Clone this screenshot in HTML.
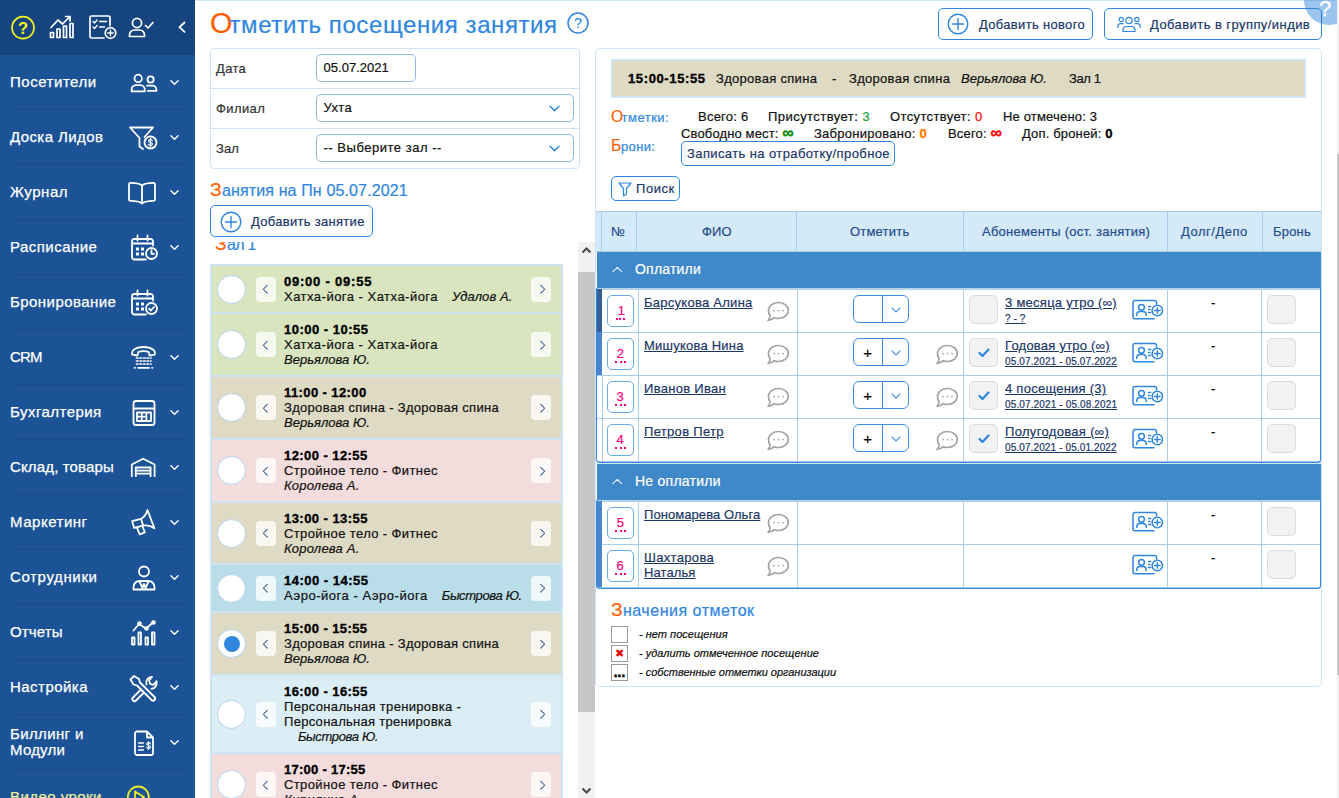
<!DOCTYPE html>
<html lang="ru"><head>
<meta charset="utf-8">
<title>Отметить посещения занятия</title>
<style>
*{box-sizing:border-box;margin:0;padding:0}
html,body{width:1339px;height:798px;overflow:hidden;background:#fff}
body{font-family:"Liberation Sans",sans-serif;font-size:13px;color:#111;position:relative;-webkit-text-stroke:.2px}
strong,b{-webkit-text-stroke:.35px}
a{color:#1b3766;text-decoration:underline}
svg{display:block}
em,i{font-style:italic}
.abs{position:absolute}
.o{color:#ff5e00;font-size:120%}
/* ---------- sidebar ---------- */
#sb{position:absolute;left:0;top:0;width:195px;height:798px;background:#1b5396;overflow:hidden;color:#fff}
#sb .top{height:55px;background:#15447f;position:relative}
#sb .top svg{position:absolute}
.mi{height:55px;position:relative}
.mi:after{content:"";position:absolute;left:12px;right:11px;bottom:0;height:1px;background:#184b8a}
.mi span{position:absolute;left:10px;top:17px;font-size:15px;line-height:20px;white-space:nowrap;-webkit-text-stroke:.25px}
.mi svg.ic{position:absolute;left:127px;top:11px;width:34px;height:34px;fill:none;stroke:#fff;stroke-width:1.8;stroke-linecap:round;stroke-linejoin:round}
.mi svg.ch{position:absolute;left:169.500px;top:22.500px;width:9px;height:9px;fill:none;stroke:#fff;stroke-width:1.600;stroke-linecap:round;stroke-linejoin:round}
/* ---------- main ---------- */
#topline{position:absolute;left:195px;top:0;width:1142px;height:1px;background:#cfe4f2}
h1{position:absolute;left:210px;top:3px;font-size:24px;line-height:40px;font-weight:400;color:#2e86de;white-space:nowrap}
.helpc{position:absolute}
#fbox{position:absolute;left:210px;top:48px;width:370px;height:121px;border:1px solid #cfe2f3;border-radius:4px}
.fr{height:40px;border-bottom:1px solid #cfe2f3;position:relative}
.fr:last-child{border-bottom:0}
.fr label{position:absolute;left:5px;top:11px;font-size:13px;line-height:18px;color:#333}
.inp{position:absolute;left:105px;top:5px;height:28px;border:1px solid #8fbbe6;border-radius:5px;font-size:13px;line-height:26px;color:#111;padding-left:6.500px;white-space:nowrap}
.sch{position:absolute;right:13px;top:8px;width:11px;height:11px;fill:none;stroke:#2e86de;stroke-width:1.300;stroke-linecap:round;stroke-linejoin:round}
h2{position:absolute;font-size:16px;line-height:28px;font-weight:400;color:#2e86de;white-space:nowrap}
.btn{position:absolute;border:1px solid #2e86de;border-radius:5px;background:#fff;color:#1b3766;font-size:13px}
.btn span{position:absolute;line-height:16px;white-space:nowrap}
.btn svg{position:absolute;fill:none;stroke:#2e86de;stroke-width:1.400;stroke-linecap:round}
#lst{position:absolute;left:205px;top:242px;width:373px;height:556px;overflow:hidden}
#lst h3{position:absolute;left:10px;top:-12px;font-size:16px;line-height:28px;font-weight:400;color:#2e86de;white-space:nowrap}
.li{position:relative;margin-left:5px;width:353px;border:2px solid #cfe4f3;border-bottom:0}
#lst .li:nth-of-type(1){margin-top:22px}
.li.g{background:#d9e5bf}.li.b{background:#dfdac4}.li.p{background:#f3dcdc}.li.a{background:#b9dde9}.li.l{background:#dceef5}
.rd{position:absolute;left:5px;top:50%;margin-top:-14.500px;width:29px;height:29px;border-radius:50%;background:#fff;border:1px solid #b5d3ee}
.rd.on:after{content:"";position:absolute;left:5.500px;top:5.500px;width:16px;height:16px;border-radius:50%;background:#2e86de}
.pv,.nx{position:absolute;top:50%;margin-top:-12.500px;width:20px;height:25px;border-radius:4px;background:rgba(255,255,255,.78)}
.pv{left:44px}.nx{left:319px}
.nx svg{left:7.500px !important}
.pv svg,.nx svg{position:absolute;left:6px;top:7.500px;width:7px;height:10.500px;fill:none;stroke:#34558a;stroke-width:1.150;stroke-linecap:round;stroke-linejoin:round}
.tx{position:absolute;left:72px;top:8px;line-height:15px;font-size:13px;color:#111;white-space:nowrap}
.tx strong{font-weight:700;color:#000}
#lsb{position:absolute;left:578px;top:242px;width:17px;height:556px;background:#f1f1f1}
#lsb i{position:absolute;left:0;top:30px;width:17px;height:440px;background:#c6c6c6}
#lsb svg{position:absolute;left:0;width:17px;height:17px;fill:none;stroke:#4a4a4a;stroke-width:2.100}
#lsb .up{top:0}#lsb .dn{bottom:0}
#pnl{position:absolute;left:595px;top:48px;width:727px;height:639px;border:1px solid #cfe2f3;border-radius:5px}
#hc{position:absolute;left:1304px;top:-25px;width:50px;height:50px;border-radius:50%;background:rgba(46,134,222,.48);color:#fff}
#hc span{position:absolute;left:15px;top:24px;font-size:22px;line-height:20px;font-weight:400;-webkit-text-stroke:.4px #fff}
#ibar{position:absolute;left:611px;top:59px;width:695px;height:39px;border:2px solid #cfe4f3;background:#dfdac4;white-space:nowrap}
#ibar>*{position:absolute;top:10px;line-height:15px;font-size:13px;color:#111}
#ibar strong{color:#000}
.sl{position:absolute;line-height:20px;font-size:13px;white-space:pre;color:#111}
.sl b{font-weight:700}
#thead{position:absolute;left:596px;top:211px;width:725px;height:41px;background:#d4eaf8;border-top:1px solid #a9cde9;border-bottom:1px solid #a9cde9;color:#244c8c;white-space:nowrap}
#thead span{position:absolute;top:12px;line-height:16px;font-size:13px}
.vl{position:absolute;top:0;bottom:0;width:1px;background:#a9cde9}
.grp{position:absolute;left:597px;width:724px;height:39px;background:#3f88c9;border-top:1px solid #a9cde9;border-bottom:2px solid #b4d3ea;color:#fff}
.grp.g2{height:40px;border-top:2px solid #d6e7f5}
.grp.g2 svg{top:13.500px}.grp.g2 span{top:8px}
.grp svg{position:absolute;left:14.500px;top:13.500px;width:10.500px;height:7px;fill:none;stroke:#eef4fb;stroke-width:1.200;stroke-linecap:round;stroke-linejoin:round}
.grp span{position:absolute;left:38px;top:8px;font-size:14px;line-height:18px;white-space:nowrap}
.tr{position:absolute;left:597px;width:724px;height:43px;border-bottom:1px solid #a9cde9;background:#fff}
.tr .bar{position:absolute;left:0;top:-1px;bottom:0;width:5px}
.nb{position:absolute;left:10px;top:5px;width:27px;height:32px;border:1px solid #6aa8e6;border-radius:5px;text-align:center;color:#f0047f;font-size:13px;line-height:30px}
.nb span{border-bottom:2px dotted #f0047f;padding:0 1.500px 0}
.nm{position:absolute;left:47px;top:5px;line-height:15px;white-space:nowrap}
.chat{position:absolute;fill:none;stroke:#a3a3a3;stroke-width:1.700;stroke-linejoin:round}
.chat .d{fill:#a3a3a3;stroke:none}
.card{position:absolute;fill:none;stroke:#2e86de;stroke-width:1.500;stroke-linecap:round;stroke-linejoin:round}
.sel{position:absolute;left:256px;top:5px;width:56px;height:28px;border:1px solid #3a8ee6;border-radius:6px;line-height:26px}
.sel span{position:absolute;left:0;top:.500px;width:28px;text-align:center;color:#000;font-size:15px}
.sel i{position:absolute;left:28px;top:0;bottom:0;width:1px;background:#3a8ee6}
.sel svg{position:absolute;left:37px;top:8.500px;width:10px;height:10px;fill:none;stroke:#4f9be6;stroke-width:1.100;stroke-linecap:round;stroke-linejoin:round}
.cb{position:absolute;left:372px;top:5px;width:29px;height:29px;border:1px solid #dcdcdc;border-radius:5px;background:#f2f2f2}
.cb svg{position:absolute;left:8px;top:9px;width:12px;height:10px;fill:none;stroke:#2e86de;stroke-width:2.200;stroke-linecap:round;stroke-linejoin:round}
.sub{position:absolute;left:408px;top:5px;line-height:15px;white-space:nowrap}
.sub .sm{font-size:10px}
.dash{position:absolute;left:614px;top:5px;line-height:15px;color:#000}
.tw{position:absolute;left:596px;width:725px;border:1px solid #2e86de;border-top:0;border-radius:0 0 4px 4px;pointer-events:none}
.inf{font-size:16px;line-height:10px}
.lg{position:absolute;left:611px;height:16px;white-space:nowrap}
.lg i{position:absolute;left:0;top:0;width:17px;height:17px;border:1px solid #9a9a9a;background:#fff}
.lg i b{position:absolute;line-height:12px;font-style:normal;color:#000}
.lg em{position:absolute;left:28px;top:0;font-size:11px;line-height:16px;color:#111}
#psb{position:absolute;left:1337px;top:0;width:2px;height:798px;background:#f1f1f1}
#psb i{position:absolute;left:0;top:154px;width:2px;height:521px;background:#c6c6c6}
</style></head><body>
<div id="sb">
  <div class="top">
    <svg style="left:10px;top:15px;width:26px;height:26px" viewBox="0 0 26 26"><circle cx="13" cy="12.700" r="11" fill="none" stroke="#f4f41a" stroke-width="1.700"></circle><text x="13" y="18.600" text-anchor="middle" font-family="Liberation Sans, sans-serif" font-size="16.500" font-weight="700" fill="#f4f41a">?</text></svg>
    <svg style="left:48px;top:14px;width:30px;height:26px;fill:none;stroke:#fff;stroke-width:1.700;stroke-linejoin:round;stroke-linecap:round" viewBox="0 0 30 26"><path d="M2.500 18.500h3v5h-3zM9 15h3v8.500h-3zM15.500 12h3v11.500h-3zM22 9.500h3v14h-3z"></path><path d="M3 13.500l7-7.500 4.500 4 7.500-7.500M17.500 2.500h4.500v4.500"></path></svg>
    <svg style="left:88px;top:14px;width:30px;height:27px;fill:none;stroke:#fff;stroke-width:1.700;stroke-linejoin:round;stroke-linecap:round" viewBox="0 0 30 27"><path d="M16 24h-12.500a1.500 1.500 0 0 1-1.500-1.500v-19a1.500 1.500 0 0 1 1.500-1.500h17a1.500 1.500 0 0 1 1.500 1.500v8"></path><path d="M5 7.500l1.500 1.500 2.500-3M11.500 7.500h7M5 13l1.500 1.500 2.500-3M11.500 13h5" stroke-width="1.400"></path><circle cx="22.500" cy="19" r="5.300"></circle><path d="M22.500 16.300v5.400M19.800 19h5.400" stroke-width="1.400"></path></svg>
    <svg style="left:127px;top:15px;width:30px;height:24px;fill:none;stroke:#fff;stroke-width:1.700;stroke-linejoin:round;stroke-linecap:round" viewBox="0 0 30 24"><circle cx="10" cy="8" r="4.600"></circle><path d="M2.500 21.500v-1.500a5 5 0 0 1 5-5h5a5 5 0 0 1 5 5v1.500zM18.500 10.500l2.500 2.500 5-5.500"></path></svg>
    <svg style="left:176px;top:20px;width:12px;height:14px;fill:none;stroke:#fff;stroke-width:1.800;stroke-linejoin:round;stroke-linecap:round" viewBox="0 0 12 14"><path d="M8.500 2.500l-5 4.700 5 4.700"></path></svg>
  </div>
  <div class="mi"><span style="letter-spacing: 0.527px;">Посетители</span>
    <svg class="ic" viewBox="0 0 34 34"><circle cx="11.2" cy="12.4" r="3.7"></circle><path d="M4.6 25.3v-1.6a4.6 4.6 0 0 1 4.6-4.6h4a4.6 4.6 0 0 1 4.6 4.6v1.6z"></path><circle cx="23.6" cy="13.4" r="3.1"></circle><path d="M20 19.6h5.4a4 4 0 0 1 4 4v1.2h-8.6"></path></svg>
    <svg class="ch" viewBox="0 0 10 10"><path d="M1 3l4 4 4-4"></path></svg></div>
  <div class="mi"><span style="letter-spacing: 0.399px;">Доска Лидов</span>
    <svg class="ic" viewBox="0 0 34 34"><path d="M3 6.5h23l-8.5 9.5M3 6.5l9.5 10.5v8.5l3.5 2.5"></path><circle cx="23.5" cy="21.5" r="6"></circle><path d="M25.3 19.6c-.4-.8-1.1-1.1-1.9-1.1-1.1 0-1.9.6-1.9 1.5 0 2 3.900 1 3.900 3 0 .9-.8 1.500-1.900 1.500-.9 0-1.700-.4-2.100-1.200M23.500 17.300v8.400" stroke-width="1.200"></path></svg>
    <svg class="ch" viewBox="0 0 10 10"><path d="M1 3l4 4 4-4"></path></svg></div>
  <div class="mi"><span style="letter-spacing: 0.568px;">Журнал</span>
    <svg class="ic" viewBox="0 0 34 34"><path d="M15 9.500c-2.500-2-5.500-2.600-11.500-2.600a1.500 1.500 0 0 0-1.500 1.500v15a1.500 1.500 0 0 0 1.500 1.500c6 0 9 .6 11.500 2.600 2.500-2 5.500-2.600 11.500-2.600a1.500 1.500 0 0 0 1.500-1.500v-15a1.500 1.500 0 0 0-1.500-1.500c-6 0-9 .6-11.500 2.600zM15 9.500v18"></path></svg>
    <svg class="ch" viewBox="0 0 10 10"><path d="M1 3l4 4 4-4"></path></svg></div>
  <div class="mi"><span style="letter-spacing: 0.473px;">Расписание</span>
    <svg class="ic" viewBox="0 0 34 34"><path d="M19 28.500h-11.500a2.500 2.500 0 0 1-2.500-2.500v-15.500a2.500 2.500 0 0 1 2.500-2.500h16a2.500 2.500 0 0 1 2.500 2.500v4M5 12.500h21M10.500 4.500v5M20.500 4.500v5"></path><path d="M9 16.500h3v3h-3zM14 16.500h3v3h-3zM9 21.500h3v3h-3zM14 21.500h3v3h-3z" fill="#fff" stroke="none"></path><circle cx="24.500" cy="22.500" r="5.500"></circle><path d="M24.500 19.500v3.300h2.500"></path></svg>
    <svg class="ch" viewBox="0 0 10 10"><path d="M1 3l4 4 4-4"></path></svg></div>
  <div class="mi"><span style="letter-spacing: 0.443px;">Бронирование</span>
    <svg class="ic" viewBox="0 0 34 34"><path d="M19 28.500h-11.500a2.500 2.500 0 0 1-2.500-2.500v-15.500a2.500 2.500 0 0 1 2.500-2.500h16a2.500 2.500 0 0 1 2.500 2.500v4M5 12.500h21M10.500 4.500v5M20.500 4.500v5"></path><path d="M9 16.500h3v3h-3zM14 16.500h3v3h-3zM9 21.500h3v3h-3zM14 21.500h3v3h-3z" fill="#fff" stroke="none"></path><circle cx="24.500" cy="22.500" r="5.500"></circle><path d="M22 22.700l1.800 1.800 3.200-3.500"></path></svg></div>
  <div class="mi"><span style="letter-spacing: -0.812px;">CRM</span>
    <svg class="ic" viewBox="0 0 34 34"><path d="M5 12.500c0-1.500.5-3 2-4 2.500-1.700 5.500-2.500 9.500-2.500s7 .8 9.500 2.500c1.500 1 2 2.500 2 4l-.3 1.200-5.200.8-.8-3.500c-1.500-.6-3.200-.9-5.200-.9s-3.700.3-5.200.9l-.8 3.500-5.200-.8z"></path><path d="M9.500 17h1.500M13 17h1.500M16.500 17h1.500M20 17h1.500M23.500 17h.5M9.500 20h1.500M13 20h1.500M16.500 20h1.500M20 20h1.500M23.500 20h.5M9.500 23h1.500M13 23h1.500M16.500 23h1.500M20 23h1.500M23.500 23h.5M7.500 26.800h.5M11 26.800h11M25 26.800h.5" stroke-width="1.700"></path></svg>
    <svg class="ch" viewBox="0 0 10 10"><path d="M1 3l4 4 4-4"></path></svg></div>
  <div class="mi"><span style="letter-spacing: 0.457px;">Бухгалтерия</span>
    <svg class="ic" viewBox="0 0 34 34"><rect x="6.500" y="5" width="21" height="24" rx="2.500"></rect><path d="M6.500 12.500h21"></path><path d="M10 16.500h14v8.500h-14zM14.700 16.500v8.500M19.400 16.500v8.500M10 20.700h9.400"></path></svg>
    <svg class="ch" viewBox="0 0 10 10"><path d="M1 3l4 4 4-4"></path></svg></div>
  <div class="mi"><span style="letter-spacing: 0.147px;">Склад, товары</span>
    <svg class="ic" viewBox="0 0 34 34"><path d="M4.800 25.200v-11.700l11.400-5.800 11.400 5.800v11.700M8.800 25.200v-8.700h14.800v8.700M8.800 19.600h14.800M8.800 22.700h14.800"></path></svg>
    <svg class="ch" viewBox="0 0 10 10"><path d="M1 3l4 4 4-4"></path></svg></div>
  <div class="mi"><span style="letter-spacing: 0.521px;">Маркетинг</span>
    <svg class="ic" viewBox="0 0 34 34"><path d="M5.100 15.100l9-2.200c2.900-1.400 4.900-4.400 6.400-8.800l6.900 18.100c-3.900-2.700-7.400-3.200-11.300-2.600l-9 2.300zM14.100 12.900l2 6.700M9.900 21.300l2.800 7.100 5.100-2-2.500-6.400"></path></svg>
    <svg class="ch" viewBox="0 0 10 10"><path d="M1 3l4 4 4-4"></path></svg></div>
  <div class="mi"><span style="letter-spacing: 0.634px;">Сотрудники</span>
    <svg class="ic" viewBox="0 0 34 34"><circle cx="17" cy="10.500" r="5"></circle><path d="M6.500 28.500v-2.500a6 6 0 0 1 6-6h9a6 6 0 0 1 6 6v2.500zM12.500 20.500l3 6.500 1.500-4 1.500 4 3-6.500"></path></svg>
    <svg class="ch" viewBox="0 0 10 10"><path d="M1 3l4 4 4-4"></path></svg></div>
  <div class="mi"><span style="letter-spacing: 0.156px;">Отчеты</span>
    <svg class="ic" viewBox="0 0 34 34"><path d="M5 21.500h2.500v7h-2.500zM11.500 16.500h2.500v12h-2.500zM18.500 21.500h2.500v7h-2.500zM25 16.500h2.500v12h-2.500z"></path><path d="M6.500 14.500l5.500-6.500 7 4.500 7-6"></path><circle cx="12.500" cy="7.500" r="1.400"></circle><circle cx="19.500" cy="12.500" r="1.400"></circle><circle cx="26.500" cy="6.500" r="1.400"></circle></svg>
    <svg class="ch" viewBox="0 0 10 10"><path d="M1 3l4 4 4-4"></path></svg></div>
  <div class="mi"><span style="letter-spacing: 0.458px;">Настройка</span>
    <svg class="ic" viewBox="0 0 34 34"><path d="M7 5l5 3 1 3.500 14.500 14.500a2 2 0 0 1-3 3l-14.500-14.500-3.500-1-3-5z"></path><path d="M19.500 13.500c-1-3 .5-6.500 4-7.500l1.500-.2-3 3.500 1 3.500 3.500 1 3-3.500c.8 3.500-1 7-5 7.500M14 18.500l-8 8a2 2 0 0 0 3 3l8-8"></path></svg>
    <svg class="ch" viewBox="0 0 10 10"><path d="M1 3l4 4 4-4"></path></svg></div>
  <div class="mi"><span style="top: 11px; line-height: 16px; letter-spacing: 0.361px;">Биллинг и</span><span style="top: 27px; line-height: 16px; letter-spacing: 0.232px;">Модули</span>
    <svg class="ic" viewBox="0 0 34 34"><path d="M10 5.500h10l6 6v15.500a2 2 0 0 1-2 2h-14a2 2 0 0 1-2-2v-19.500a2 2 0 0 1 2-2zM20 5.500v6h6"></path><path d="M11.500 17h5M11.500 20.500h5M11.500 24h5" stroke-width="1.400"></path><path d="M23.300 17.700c-.4-.7-1-1-1.800-1-1 0-1.700.6-1.700 1.400 0 1.900 3.600.9 3.600 2.800 0 .8-.7 1.400-1.800 1.400-.8 0-1.500-.4-1.900-1.100M21.500 15.500v8" stroke-width="1.200"></path></svg>
    <svg class="ch" viewBox="0 0 10 10"><path d="M1 3l4 4 4-4"></path></svg></div>
  <div class="mi"><span style="color: rgb(235, 238, 155); letter-spacing: 0.44px;">Видео уроки</span>
    <svg class="ic" viewBox="0 0 34 34" style="stroke:#e8ea2a"><circle cx="11.300" cy="16" r="10.500"></circle><path d="M8 10.500l9 5.500-9 5.500z"></path></svg></div>
</div>
<div id="topline"></div>
<h1><span class="o" style="letter-spacing: -2.906px;">О</span><span style="letter-spacing: 0.59px;">тметить посещения занятия</span></h1>
<div class="helpc" style="left:567px;top:12px"><svg width="22" height="22" viewBox="0 0 22 22"><circle cx="11" cy="11" r="10" fill="none" stroke="#2e86de" stroke-width="1.500"></circle><text x="11" y="16" text-anchor="middle" font-family="Liberation Sans, sans-serif" font-size="14.500" fill="#2e86de">?</text></svg></div>
<div id="fbox">
  <div class="fr"><label style="letter-spacing: 0.355px;">Дата</label><div class="inp" style="width:100px"><span style="letter-spacing: 0.03px;">05.07.2021</span></div></div>
  <div class="fr"><label style="letter-spacing: 0.401px;">Филиал</label><div class="inp" style="width:258px"><span style="letter-spacing: 0.355px;">Ухта</span><svg class="sch" viewBox="0 0 10 10"><path d="M1 3l4 4 4-4"></path></svg></div></div>
  <div class="fr"><label style="letter-spacing: 0.042px;">Зал</label><div class="inp" style="width:258px"><span style="letter-spacing: 0.523px;">-- Выберите зал --</span><svg class="sch" viewBox="0 0 10 10"><path d="M1 3l4 4 4-4"></path></svg></div></div>
</div>
<h2 style="left:210px;top:176px"><span class="o" style="letter-spacing: 0.328px;">З</span><span style="letter-spacing: 0.135px;">анятия на Пн 05.07.2021</span></h2>
<div class="btn" style="left:210px;top:205px;width:163px;height:32px"><svg class="plus" style="left:8.500px;top:4.500px" width="22" height="22" viewBox="0 0 22 22"><circle cx="11" cy="11" r="9.800"></circle><path d="M11 5.500v11M5.500 11h11"></path></svg><span style="left: 40px; top: 8px; letter-spacing: 0.296px;">Добавить занятие</span></div>
<div id="lst">
  <h3><span class="o" style="letter-spacing: 0.328px;">З</span><span style="letter-spacing: -0.672px;">ал 1</span></h3>
  <div class="li g" style="height:48px"><i class="rd"></i><b class="pv"><svg viewBox="0 0 8 12"><path d="M6 1.500l-4.500 4.500 4.500 4.500"></path></svg></b><div class="tx"><strong style="letter-spacing: 0.776px;">09:00 - 09:55</strong><br><span style="letter-spacing: 0.485px;">Хатха-йога - Хатха-йога</span><em style="margin-left: 14px; letter-spacing: 0.08px;">Удалов А.</em></div><b class="nx"><svg viewBox="0 0 8 12"><path d="M2 1.500l4.500 4.500-4.500 4.500"></path></svg></b></div>
  <div class="li g" style="height:63px"><i class="rd"></i><b class="pv"><svg viewBox="0 0 8 12"><path d="M6 1.500l-4.500 4.500 4.500 4.500"></path></svg></b><div class="tx"><strong style="letter-spacing: 0.489px;">10:00 - 10:55</strong><br><span style="letter-spacing: 0.485px;">Хатха-йога - Хатха-йога</span><br><em style="letter-spacing: 0.012px;">Верьялова Ю.</em></div><b class="nx"><svg viewBox="0 0 8 12"><path d="M2 1.500l4.500 4.500-4.500 4.500"></path></svg></b></div>
  <div class="li b" style="height:63px"><i class="rd"></i><b class="pv"><svg viewBox="0 0 8 12"><path d="M6 1.500l-4.500 4.500 4.500 4.500"></path></svg></b><div class="tx"><strong style="letter-spacing: 0.399px;">11:00 - 12:00</strong><br><span style="letter-spacing: 0.306px;">Здоровая спина - Здоровая спина</span><br><em style="letter-spacing: 0.012px;">Верьялова Ю.</em></div><b class="nx"><svg viewBox="0 0 8 12"><path d="M2 1.500l4.500 4.500-4.500 4.500"></path></svg></b></div>
  <div class="li p" style="height:63px"><i class="rd"></i><b class="pv"><svg viewBox="0 0 8 12"><path d="M6 1.500l-4.500 4.500 4.500 4.500"></path></svg></b><div class="tx"><strong style="letter-spacing: 0.429px;">12:00 - 12:55</strong><br><span style="letter-spacing: 0.384px;">Стройное тело - Фитнес</span><br><em style="letter-spacing: 0.2px;">Королева А.</em></div><b class="nx"><svg viewBox="0 0 8 12"><path d="M2 1.500l4.500 4.500-4.500 4.500"></path></svg></b></div>
  <div class="li b" style="height:62px"><i class="rd"></i><b class="pv"><svg viewBox="0 0 8 12"><path d="M6 1.500l-4.500 4.500 4.500 4.500"></path></svg></b><div class="tx"><strong style="letter-spacing: 0.447px;">13:00 - 13:55</strong><br><span style="letter-spacing: 0.384px;">Стройное тело - Фитнес</span><br><em style="letter-spacing: 0.2px;">Королева А.</em></div><b class="nx"><svg viewBox="0 0 8 12"><path d="M2 1.500l4.500 4.500-4.500 4.500"></path></svg></b></div>
  <div class="li a" style="height:48px"><i class="rd"></i><b class="pv"><svg viewBox="0 0 8 12"><path d="M6 1.500l-4.500 4.500 4.500 4.500"></path></svg></b><div class="tx"><strong style="letter-spacing: 0.495px;">14:00 - 14:55</strong><br><span style="letter-spacing: 0.529px;">Аэро-йога - Аэро-йога</span><em style="margin-left: 14px; letter-spacing: -0.348px;">Быстрова Ю.</em></div><b class="nx"><svg viewBox="0 0 8 12"><path d="M2 1.500l4.500 4.500-4.500 4.500"></path></svg></b></div>
  <div class="li b" style="height:63px"><i class="rd on"></i><b class="pv"><svg viewBox="0 0 8 12"><path d="M6 1.500l-4.500 4.500 4.500 4.500"></path></svg></b><div class="tx"><strong style="letter-spacing: 0.421px;">15:00 - 15:55</strong><br><span style="letter-spacing: 0.306px;">Здоровая спина - Здоровая спина</span><br><em style="letter-spacing: 0.012px;">Верьялова Ю.</em></div><b class="nx"><svg viewBox="0 0 8 12"><path d="M2 1.500l4.500 4.500-4.500 4.500"></path></svg></b></div>
  <div class="li l" style="height:78px"><i class="rd"></i><b class="pv"><svg viewBox="0 0 8 12"><path d="M6 1.500l-4.500 4.500 4.500 4.500"></path></svg></b><div class="tx"><strong style="letter-spacing: 0.43px;">16:00 - 16:55</strong><br><span style="letter-spacing: 0.329px;">Персональная тренировка -</span><br><span style="letter-spacing: 0.291px;">Персональная тренировка</span><br><em style="margin-left: 14px; letter-spacing: -0.348px;">Быстрова Ю.</em></div><b class="nx"><svg viewBox="0 0 8 12"><path d="M2 1.500l4.500 4.500-4.500 4.500"></path></svg></b></div>
  <div class="li p" style="height:63px"><i class="rd"></i><b class="pv"><svg viewBox="0 0 8 12"><path d="M6 1.500l-4.500 4.500 4.500 4.500"></path></svg></b><div class="tx"><strong style="letter-spacing: 0.275px;">17:00 - 17:55</strong><br><span style="letter-spacing: 0.384px;">Стройное тело - Фитнес</span><br><em style="letter-spacing: 0.347px;">Кирилина А.</em></div><b class="nx"><svg viewBox="0 0 8 12"><path d="M2 1.500l4.500 4.500-4.500 4.500"></path></svg></b></div>
</div>
<div id="lsb"><svg class="up" viewBox="0 0 17 17"><path d="M4.500 10.500l4-4 4 4"></path></svg><i></i><svg class="dn" viewBox="0 0 17 17"><path d="M4.500 7.500l4 4 4-4"></path></svg></div>
<div id="pnl"></div>
<div class="btn" style="left:938px;top:8px;width:155px;height:32px"><svg style="left:8px;top:4px" width="22" height="22" viewBox="0 0 22 22"><circle cx="11" cy="11" r="9.800"></circle><path d="M11 5.500v11M5.500 11h11"></path></svg><span style="left: 40px; top: 8px; letter-spacing: 0.324px;">Добавить нового</span></div>
<div class="btn" style="left:1104px;top:8px;width:218px;height:32px"><svg style="left:12px;top:7px;stroke-width:1.200" width="24" height="17" viewBox="0 0 24 17"><circle cx="12" cy="4.500" r="3.200"></circle><path d="M6 15.500v-1.500a3.500 3.500 0 0 1 3.500-3.500h5a3.500 3.500 0 0 1 3.500 3.500v1.500z"></path><circle cx="4.200" cy="3.500" r="2.100"></circle><circle cx="19.800" cy="3.500" r="2.100"></circle><path d="M.8 11.500v-1.200a2.600 2.600 0 0 1 2.600-2.600h2.600M23.200 11.500v-1.200a2.600 2.600 0 0 0-2.600-2.600h-2.600"></path></svg><span style="left: 45px; top: 8px; letter-spacing: 0.43px;">Добавить в группу/индив</span></div>
<div id="hc"><span>?</span></div>
<div id="ibar"><strong style="left: 15px; letter-spacing: 0.621px;">15:00-15:55</strong><span style="left: 103px; letter-spacing: 0.299px;">Здоровая спина</span><span style="left: 219px; letter-spacing: 1.953px;">-</span><span style="left: 236px; letter-spacing: 0.299px;">Здоровая спина</span><em style="left: 348px; letter-spacing: 0.012px;">Верьялова Ю.</em><span style="left: 456px; letter-spacing: -0.394px;">Зал 1</span></div>
<div class="sl" style="left:611px;top:107px;color:#2e86de"><span class="o" style="letter-spacing: -1.578px;">О</span><span style="letter-spacing: 0.493px;">тметки:</span></div>
<div class="sl" style="left:698px;top:107px"><span style="letter-spacing: 0.232px;">Всего: 6</span></div>
<div class="sl" style="left:768px;top:107px"><span style="letter-spacing: 0.451px;">Присутствует: </span><span style="color: rgb(30, 158, 60); letter-spacing: 0.594px;">3</span></div>
<div class="sl" style="left:890px;top:107px"><span style="letter-spacing: 0.365px;">Отсутствует: </span><span style="color: rgb(255, 0, 0); letter-spacing: 1.031px;">0</span></div>
<div class="sl" style="left:1003px;top:107px"><span style="letter-spacing: 0.173px;">Не отмечено: 3</span></div>
<div class="sl" style="left:611px;top:136px;color:#2e86de"><span class="o" style="letter-spacing: -0.25px;">Б</span><span style="letter-spacing: 0.372px;">рони:</span></div>
<div class="sl" style="left:681px;top:124px"><span style="letter-spacing: 0.138px;">Свободно мест: </span><b class="inf" style="color: rgb(10, 138, 10); letter-spacing: 2.797px;">∞</b></div>
<div class="sl" style="left:814px;top:124px"><span style="letter-spacing: 0.26px;">Забронировано: </span><b style="color: rgb(255, 123, 0); letter-spacing: 1.609px;">0</b></div>
<div class="sl" style="left:948px;top:124px"><span style="letter-spacing: 0.181px;">Всего: </span><b class="inf" style="color: rgb(255, 0, 0); letter-spacing: 2.797px;">∞</b></div>
<div class="sl" style="left:1022px;top:124px"><span style="letter-spacing: 0.151px;">Доп. броней: </span><b style="color: rgb(0, 0, 0); letter-spacing: 1.609px;">0</b></div>
<div class="btn" style="left:681px;top:141px;width:214px;height:25px"><span style="left: 5px; top: 4px; letter-spacing: 0.398px;">Записать на отработку/пробное</span></div>
<div class="btn" style="left:611px;top:176px;width:69px;height:25px"><svg style="left:6px;top:5px;stroke-width:1.200;stroke-linejoin:round" width="14" height="15" viewBox="0 0 14 15"><path d="M1 1h12l-4.500 5.500v5.500l-3 2v-7.500z"></path></svg><span style="left: 24px; top: 4px; letter-spacing: 0.556px;">Поиск</span></div>
<div id="thead"><i class="vl" style="left:5px"></i><i class="vl" style="left:40px"></i><i class="vl" style="left:200px"></i><i class="vl" style="left:367px"></i><i class="vl" style="left:571px"></i><i class="vl" style="left:666px"></i>
<span style="left: 15px; letter-spacing: 1.094px;">№</span><span style="left: 106px; letter-spacing: 0.078px;">ФИО</span><span style="left: 254px; letter-spacing: 0.201px;">Отметить</span><span style="left: 386px; letter-spacing: 0.249px;">Абонементы (ост. занятия)</span><span style="left: 585px; letter-spacing: 0.523px;">Долг/Депо</span><span style="left: 677px; letter-spacing: 0.203px;">Бронь</span></div>
<div class="grp" style="top:251px"><svg viewBox="0 0 12 8"><path d="M1 6.500l5-5 5 5"></path></svg><span style="letter-spacing: 0.203px;">Оплатили</span></div>
<div class="grp g2" style="top:462px"><svg viewBox="0 0 12 8"><path d="M1 6.500l5-5 5 5"></path></svg><span style="letter-spacing: 0.25px;">Не оплатили</span></div>
<div class="tr" style="top:290px"><i class="bar" style="background:#335f96"></i><i class="vl" style="left:41px"></i><i class="vl" style="left:200px"></i><i class="vl" style="left:366px"></i><i class="vl" style="left:570px"></i><i class="vl" style="left:664px"></i><div class="nb"><span style="letter-spacing: -1.656px;">1</span></div><div class="nm"><a style="letter-spacing: 0.266px;">Барсукова Алина</a></div><svg class="chat" style="left:168px;top:11px" width="25" height="22" viewBox="0 0 25 22"><path d="M13.500 1.500c5.500 0 9.800 3.500 9.800 8s-4.300 8-9.800 8c-1.600 0-3.100-.3-4.400-.8-1.500 1.600-3.600 2.600-6.100 2.800 1.300-1.300 2-2.900 2.100-4.700-1-1.500-1.600-3.300-1.600-5.300 0-4.500 4.500-8 10-8z"></path><circle cx="9" cy="9.600" r=".9" class="d"></circle><circle cx="13.500" cy="9.600" r=".9" class="d"></circle><circle cx="18" cy="9.600" r=".9" class="d"></circle></svg><div class="sel"><span></span><i></i><svg viewBox="0 0 10 10"><path d="M1 3l4 4 4-4"></path></svg></div><div class="cb"></div><div class="sub"><a style="letter-spacing: 0.267px;">3 месяца утро (∞)</a><br><a class="sm" style="letter-spacing: 0.072px;">? - ?</a></div><svg class="card" style="left:535px;top:9px" width="32" height="22" viewBox="0 0 32 22"><path d="M22 19.800h-19a2 2 0 0 1-2-2v-14.300a2 2 0 0 1 2-2h19.500a2 2 0 0 1 2 2v1.500"></path><circle cx="9.500" cy="8.300" r="2.900"></circle><path d="M4.800 16.500v-.8a3.300 3.300 0 0 1 3.300-3.300h2.800a3.300 3.300 0 0 1 3.300 3.300v.8"></path><path d="M16.500 7.500h2.300M16.500 10.500h1.500M16.500 13.500h2.300" stroke-width="1.300"></path><circle cx="25.300" cy="11.500" r="5.200" fill="#fff"></circle><path d="M25.300 8.700v5.600M22.500 11.500h5.600" stroke-width="1.400"></path></svg><span class="dash" style="letter-spacing: 1.953px;">-</span><div class="cb" style="left:670px"></div></div>
<div class="tr" style="top:333px"><i class="bar" style="background:#4a86d0"></i><i class="vl" style="left:41px"></i><i class="vl" style="left:200px"></i><i class="vl" style="left:366px"></i><i class="vl" style="left:570px"></i><i class="vl" style="left:664px"></i><div class="nb"><span style="letter-spacing: 0.406px;">2</span></div><div class="nm"><a style="letter-spacing: 0.225px;">Мишукова Нина</a></div><svg class="chat" style="left:168px;top:11px" width="25" height="22" viewBox="0 0 25 22"><path d="M13.500 1.500c5.500 0 9.800 3.500 9.800 8s-4.300 8-9.800 8c-1.600 0-3.100-.3-4.400-.8-1.500 1.600-3.600 2.600-6.100 2.800 1.300-1.300 2-2.900 2.100-4.700-1-1.500-1.600-3.300-1.600-5.300 0-4.500 4.500-8 10-8z"></path><circle cx="9" cy="9.600" r=".9" class="d"></circle><circle cx="13.500" cy="9.600" r=".9" class="d"></circle><circle cx="18" cy="9.600" r=".9" class="d"></circle></svg><div class="sel"><span style="letter-spacing: 0.578px;">+</span><i></i><svg viewBox="0 0 10 10"><path d="M1 3l4 4 4-4"></path></svg></div><svg class="chat" style="left:337px;top:11px" width="25" height="22" viewBox="0 0 25 22"><path d="M13.500 1.500c5.500 0 9.800 3.500 9.800 8s-4.300 8-9.800 8c-1.600 0-3.100-.3-4.400-.8-1.500 1.600-3.600 2.600-6.100 2.800 1.300-1.300 2-2.900 2.100-4.700-1-1.500-1.600-3.300-1.600-5.300 0-4.500 4.500-8 10-8z"></path><circle cx="9" cy="9.600" r=".9" class="d"></circle><circle cx="13.500" cy="9.600" r=".9" class="d"></circle><circle cx="18" cy="9.600" r=".9" class="d"></circle></svg><div class="cb"><svg viewBox="0 0 12 10"><path d="M1.500 5l3 3 6-6.500"></path></svg></div><div class="sub"><a style="letter-spacing: 0.229px;">Годовая утро (∞)</a><br><a class="sm" style="letter-spacing: 0.127px;">05.07.2021 - 05.07.2022</a></div><svg class="card" style="left:535px;top:9px" width="32" height="22" viewBox="0 0 32 22"><path d="M22 19.800h-19a2 2 0 0 1-2-2v-14.300a2 2 0 0 1 2-2h19.500a2 2 0 0 1 2 2v1.500"></path><circle cx="9.500" cy="8.300" r="2.900"></circle><path d="M4.800 16.500v-.8a3.300 3.300 0 0 1 3.300-3.300h2.800a3.300 3.300 0 0 1 3.300 3.300v.8"></path><path d="M16.500 7.500h2.300M16.500 10.500h1.500M16.500 13.500h2.300" stroke-width="1.300"></path><circle cx="25.300" cy="11.500" r="5.200" fill="#fff"></circle><path d="M25.300 8.700v5.600M22.500 11.500h5.600" stroke-width="1.400"></path></svg><span class="dash" style="letter-spacing: 1.953px;">-</span><div class="cb" style="left:670px"></div></div>
<div class="tr" style="top:376px"><i class="vl" style="left:5px"></i><i class="vl" style="left:41px"></i><i class="vl" style="left:200px"></i><i class="vl" style="left:366px"></i><i class="vl" style="left:570px"></i><i class="vl" style="left:664px"></i><div class="nb"><span style="letter-spacing: 0.594px;">3</span></div><div class="nm"><a style="letter-spacing: 0.294px;">Иванов Иван</a></div><svg class="chat" style="left:168px;top:11px" width="25" height="22" viewBox="0 0 25 22"><path d="M13.500 1.500c5.500 0 9.800 3.500 9.800 8s-4.300 8-9.800 8c-1.600 0-3.100-.3-4.400-.8-1.500 1.600-3.600 2.600-6.100 2.800 1.300-1.300 2-2.900 2.100-4.700-1-1.500-1.600-3.300-1.600-5.300 0-4.500 4.500-8 10-8z"></path><circle cx="9" cy="9.600" r=".9" class="d"></circle><circle cx="13.500" cy="9.600" r=".9" class="d"></circle><circle cx="18" cy="9.600" r=".9" class="d"></circle></svg><div class="sel"><span style="letter-spacing: 0.578px;">+</span><i></i><svg viewBox="0 0 10 10"><path d="M1 3l4 4 4-4"></path></svg></div><svg class="chat" style="left:337px;top:11px" width="25" height="22" viewBox="0 0 25 22"><path d="M13.500 1.500c5.500 0 9.800 3.500 9.800 8s-4.300 8-9.800 8c-1.600 0-3.100-.3-4.400-.8-1.500 1.600-3.600 2.600-6.100 2.800 1.300-1.300 2-2.900 2.100-4.700-1-1.500-1.600-3.300-1.600-5.300 0-4.500 4.500-8 10-8z"></path><circle cx="9" cy="9.600" r=".9" class="d"></circle><circle cx="13.500" cy="9.600" r=".9" class="d"></circle><circle cx="18" cy="9.600" r=".9" class="d"></circle></svg><div class="cb"><svg viewBox="0 0 12 10"><path d="M1.500 5l3 3 6-6.500"></path></svg></div><div class="sub"><a style="letter-spacing: 0.256px;">4 посещения (3)</a><br><a class="sm" style="letter-spacing: 0.135px;">05.07.2021 - 05.08.2021</a></div><svg class="card" style="left:535px;top:9px" width="32" height="22" viewBox="0 0 32 22"><path d="M22 19.800h-19a2 2 0 0 1-2-2v-14.300a2 2 0 0 1 2-2h19.500a2 2 0 0 1 2 2v1.500"></path><circle cx="9.500" cy="8.300" r="2.900"></circle><path d="M4.800 16.500v-.8a3.300 3.300 0 0 1 3.300-3.300h2.800a3.300 3.300 0 0 1 3.300 3.300v.8"></path><path d="M16.500 7.500h2.300M16.500 10.500h1.500M16.500 13.500h2.300" stroke-width="1.300"></path><circle cx="25.300" cy="11.500" r="5.200" fill="#fff"></circle><path d="M25.300 8.700v5.600M22.500 11.500h5.600" stroke-width="1.400"></path></svg><span class="dash" style="letter-spacing: 1.953px;">-</span><div class="cb" style="left:670px"></div></div>
<div class="tr" style="top:419px"><i class="vl" style="left:5px"></i><i class="vl" style="left:41px"></i><i class="vl" style="left:200px"></i><i class="vl" style="left:366px"></i><i class="vl" style="left:570px"></i><i class="vl" style="left:664px"></i><div class="nb"><span style="letter-spacing: 0.844px;">4</span></div><div class="nm"><a style="letter-spacing: 0.315px;">Петров Петр</a></div><svg class="chat" style="left:168px;top:11px" width="25" height="22" viewBox="0 0 25 22"><path d="M13.500 1.500c5.500 0 9.800 3.500 9.800 8s-4.300 8-9.800 8c-1.600 0-3.100-.3-4.400-.8-1.500 1.600-3.600 2.600-6.100 2.800 1.300-1.300 2-2.900 2.100-4.700-1-1.500-1.600-3.300-1.600-5.300 0-4.500 4.500-8 10-8z"></path><circle cx="9" cy="9.600" r=".9" class="d"></circle><circle cx="13.500" cy="9.600" r=".9" class="d"></circle><circle cx="18" cy="9.600" r=".9" class="d"></circle></svg><div class="sel"><span style="letter-spacing: 0.578px;">+</span><i></i><svg viewBox="0 0 10 10"><path d="M1 3l4 4 4-4"></path></svg></div><svg class="chat" style="left:337px;top:11px" width="25" height="22" viewBox="0 0 25 22"><path d="M13.500 1.500c5.500 0 9.800 3.500 9.800 8s-4.300 8-9.800 8c-1.600 0-3.100-.3-4.400-.8-1.500 1.600-3.600 2.600-6.100 2.800 1.300-1.300 2-2.900 2.100-4.700-1-1.500-1.600-3.300-1.600-5.300 0-4.500 4.500-8 10-8z"></path><circle cx="9" cy="9.600" r=".9" class="d"></circle><circle cx="13.500" cy="9.600" r=".9" class="d"></circle><circle cx="18" cy="9.600" r=".9" class="d"></circle></svg><div class="cb"><svg viewBox="0 0 12 10"><path d="M1.500 5l3 3 6-6.500"></path></svg></div><div class="sub"><a style="letter-spacing: 0.326px;">Полугодовая (∞)</a><br><a class="sm" style="letter-spacing: 0.118px;">05.07.2021 - 05.01.2022</a></div><svg class="card" style="left:535px;top:9px" width="32" height="22" viewBox="0 0 32 22"><path d="M22 19.800h-19a2 2 0 0 1-2-2v-14.300a2 2 0 0 1 2-2h19.500a2 2 0 0 1 2 2v1.500"></path><circle cx="9.500" cy="8.300" r="2.900"></circle><path d="M4.800 16.500v-.8a3.300 3.300 0 0 1 3.300-3.300h2.800a3.300 3.300 0 0 1 3.300 3.300v.8"></path><path d="M16.500 7.500h2.300M16.500 10.500h1.500M16.500 13.500h2.300" stroke-width="1.300"></path><circle cx="25.300" cy="11.500" r="5.200" fill="#fff"></circle><path d="M25.300 8.700v5.600M22.500 11.500h5.600" stroke-width="1.400"></path></svg><span class="dash" style="letter-spacing: 1.953px;">-</span><div class="cb" style="left:670px"></div></div>
<div class="tr" style="top:502px"><i class="bar" style="background:#4a86d0"></i><i class="vl" style="left:41px"></i><i class="vl" style="left:200px"></i><i class="vl" style="left:366px"></i><i class="vl" style="left:570px"></i><i class="vl" style="left:664px"></i><div class="nb"><span style="letter-spacing: 0.5px;">5</span></div><div class="nm"><a style="letter-spacing: 0.066px;">Пономарева Ольга</a></div><svg class="chat" style="left:168px;top:11px" width="25" height="22" viewBox="0 0 25 22"><path d="M13.500 1.500c5.500 0 9.800 3.500 9.800 8s-4.300 8-9.800 8c-1.600 0-3.100-.3-4.400-.8-1.500 1.600-3.600 2.600-6.100 2.800 1.300-1.300 2-2.900 2.100-4.700-1-1.500-1.600-3.300-1.600-5.300 0-4.500 4.500-8 10-8z"></path><circle cx="9" cy="9.600" r=".9" class="d"></circle><circle cx="13.500" cy="9.600" r=".9" class="d"></circle><circle cx="18" cy="9.600" r=".9" class="d"></circle></svg><svg class="card" style="left:535px;top:9px" width="32" height="22" viewBox="0 0 32 22"><path d="M22 19.800h-19a2 2 0 0 1-2-2v-14.300a2 2 0 0 1 2-2h19.500a2 2 0 0 1 2 2v1.500"></path><circle cx="9.500" cy="8.300" r="2.900"></circle><path d="M4.800 16.500v-.8a3.300 3.300 0 0 1 3.300-3.300h2.800a3.300 3.300 0 0 1 3.300 3.300v.8"></path><path d="M16.500 7.500h2.300M16.500 10.500h1.500M16.500 13.500h2.300" stroke-width="1.300"></path><circle cx="25.300" cy="11.500" r="5.200" fill="#fff"></circle><path d="M25.300 8.700v5.600M22.500 11.500h5.600" stroke-width="1.400"></path></svg><span class="dash" style="letter-spacing: 1.953px;">-</span><div class="cb" style="left:670px"></div></div>
<div class="tr" style="top:545px"><i class="bar" style="background:#4a86d0"></i><i class="vl" style="left:41px"></i><i class="vl" style="left:200px"></i><i class="vl" style="left:366px"></i><i class="vl" style="left:570px"></i><i class="vl" style="left:664px"></i><div class="nb"><span style="letter-spacing: 0.609px;">6</span></div><div class="nm"><a style="letter-spacing: 0.351px;">Шахтарова</a><br><a style="letter-spacing: 0.094px;">Наталья</a></div><svg class="chat" style="left:168px;top:11px" width="25" height="22" viewBox="0 0 25 22"><path d="M13.500 1.500c5.500 0 9.800 3.500 9.800 8s-4.300 8-9.800 8c-1.600 0-3.100-.3-4.400-.8-1.500 1.600-3.600 2.600-6.100 2.800 1.300-1.300 2-2.900 2.100-4.700-1-1.500-1.600-3.300-1.600-5.300 0-4.500 4.500-8 10-8z"></path><circle cx="9" cy="9.600" r=".9" class="d"></circle><circle cx="13.500" cy="9.600" r=".9" class="d"></circle><circle cx="18" cy="9.600" r=".9" class="d"></circle></svg><svg class="card" style="left:535px;top:9px" width="32" height="22" viewBox="0 0 32 22"><path d="M22 19.800h-19a2 2 0 0 1-2-2v-14.300a2 2 0 0 1 2-2h19.500a2 2 0 0 1 2 2v1.500"></path><circle cx="9.500" cy="8.300" r="2.900"></circle><path d="M4.800 16.500v-.8a3.300 3.300 0 0 1 3.300-3.300h2.800a3.300 3.300 0 0 1 3.300 3.300v.8"></path><path d="M16.500 7.500h2.300M16.500 10.500h1.500M16.500 13.500h2.300" stroke-width="1.300"></path><circle cx="25.300" cy="11.500" r="5.200" fill="#fff"></circle><path d="M25.300 8.700v5.600M22.500 11.500h5.600" stroke-width="1.400"></path></svg><span class="dash" style="letter-spacing: 1.953px;">-</span><div class="cb" style="left:670px"></div></div>
<div class="tw" style="top:288px;height:175px"></div><div class="tw" style="top:500px;height:89px"></div>
<h2 style="left:611px;top:596px"><span class="o" style="letter-spacing: 0.328px;">З</span><span style="letter-spacing: 0.525px;">начения отметок</span></h2>
<div class="lg" style="top:626px"><i></i><em style="letter-spacing: 0.019px;">- нет посещения</em></div>
<div class="lg" style="top:645px"><i><b style="color:#e00000;font-size:11px;left:3px;top:2px;font-family:'DejaVu Sans',sans-serif;-webkit-text-stroke:0">✖</b></i><em style="letter-spacing: 0.01px;">- удалить отмеченное посещение</em></div>
<div class="lg" style="top:664px"><i><b style="left:1.500px;top:1px;font-size:15px;font-weight:700;letter-spacing:-.3px">...</b></i><em style="letter-spacing: -0.027px;">- собственные отметки организации</em></div>
<div id="psb"><i></i></div>

</body></html>
